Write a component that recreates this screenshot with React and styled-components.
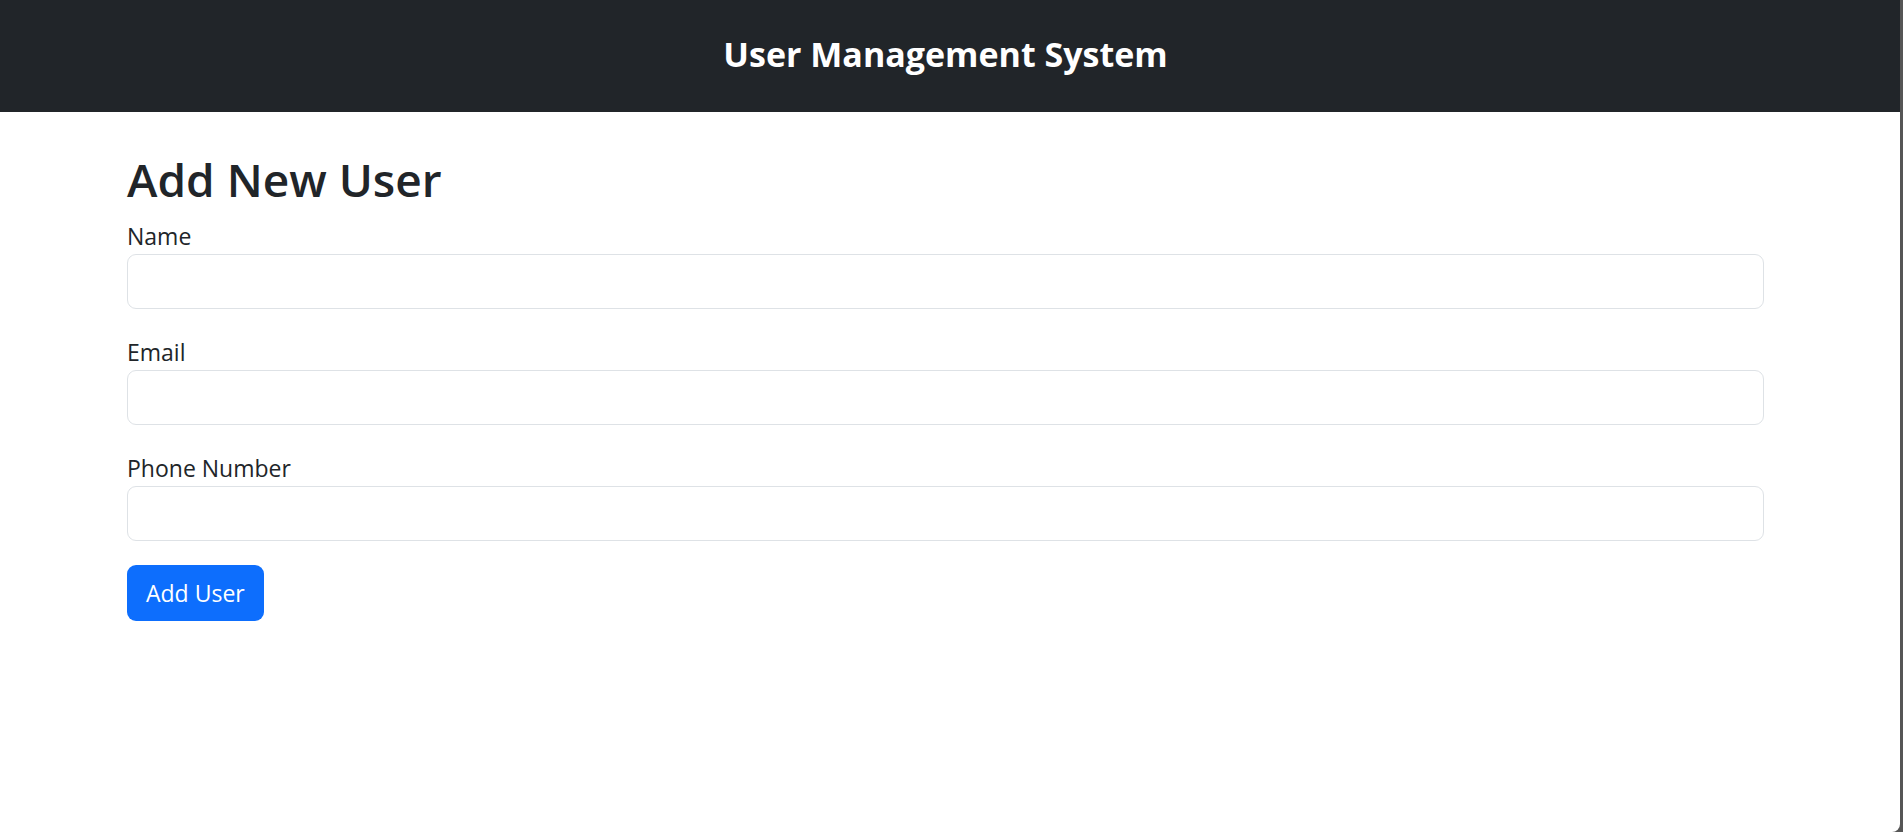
import React from 'react'
import styled, { createGlobalStyle } from 'styled-components'

const GlobalStyle = createGlobalStyle`
    html, body {
        margin: 0;
        padding: 0;
        background-color: #565656;
    }
    body {
        font-family: "Open Sans", "Liberation Sans", sans-serif;
        color: #212529;
        overflow: hidden;
    }
    * {
        box-sizing: border-box;
    }
`

const Page = styled.div`
    width: 1900px;
    min-height: 832px;
    background-color: #ffffff;
    border-bottom-right-radius: 8px;
    overflow: hidden;
`
const Header = styled.header`
    background-color: #212529;
    height: 112px;
    padding: 34px 136px 0 127px;
    text-align: center;
`
const Title = styled.h1`
    margin: 0;
    font-size: 34px;
    font-weight: 700;
    line-height: 1.2;
    color: #ffffff;
`
const Main = styled.main`
    padding: 40px 136px 0 127px;
`
const Heading = styled.h2`
    margin: 0 0 12px;
    font-size: 46px;
    font-weight: 600;
    line-height: 1.2;
    color: #212529;
`
const Form = styled.form`
    display: flex;
    flex-direction: column;
    align-items: flex-start;
`
const Field = styled.div`
    display: flex;
    flex-direction: column;
    width: 100%;
    margin-bottom: 26px;
`
const Label = styled.label`
    font-size: 23px;
    line-height: 35px;
    color: #212529;
`
const Input = styled.input`
    width: 100%;
    height: 55px;
    padding: 9px 18px;
    font-family: inherit;
    font-size: 23px;
    color: #212529;
    background-color: #ffffff;
    border: 1.5px solid #dee2e6;
    border-radius: 9px;
    outline: none;
`
const Button = styled.button`
    height: 56px;
    padding: 0 19px;
    font-family: inherit;
    font-size: 23px;
    color: #ffffff;
    background-color: #0d6efd;
    border: none;
    border-radius: 9px;
    cursor: pointer;
    margin-top: -2px;
`

const fields = [
    { id: 'name', label: 'Name', type: 'text' },
    { id: 'email', label: 'Email', type: 'email' },
    { id: 'phone', label: 'Phone Number', type: 'tel' },
]

export default function App() {
    return (
        <>
            <GlobalStyle />
            <Page>
                <Header>
                    <Title>User Management System</Title>
                </Header>
                <Main>
                    <Heading>Add New User</Heading>
                    <Form onSubmit={e => e.preventDefault()}>
                        {fields.map(field => (
                            <Field key={field.id}>
                                <Label htmlFor={field.id}>{field.label}</Label>
                                <Input id={field.id} type={field.type} />
                            </Field>
                        ))}
                        <Button type="submit">Add User</Button>
                    </Form>
                </Main>
            </Page>
        </>
    )
}
